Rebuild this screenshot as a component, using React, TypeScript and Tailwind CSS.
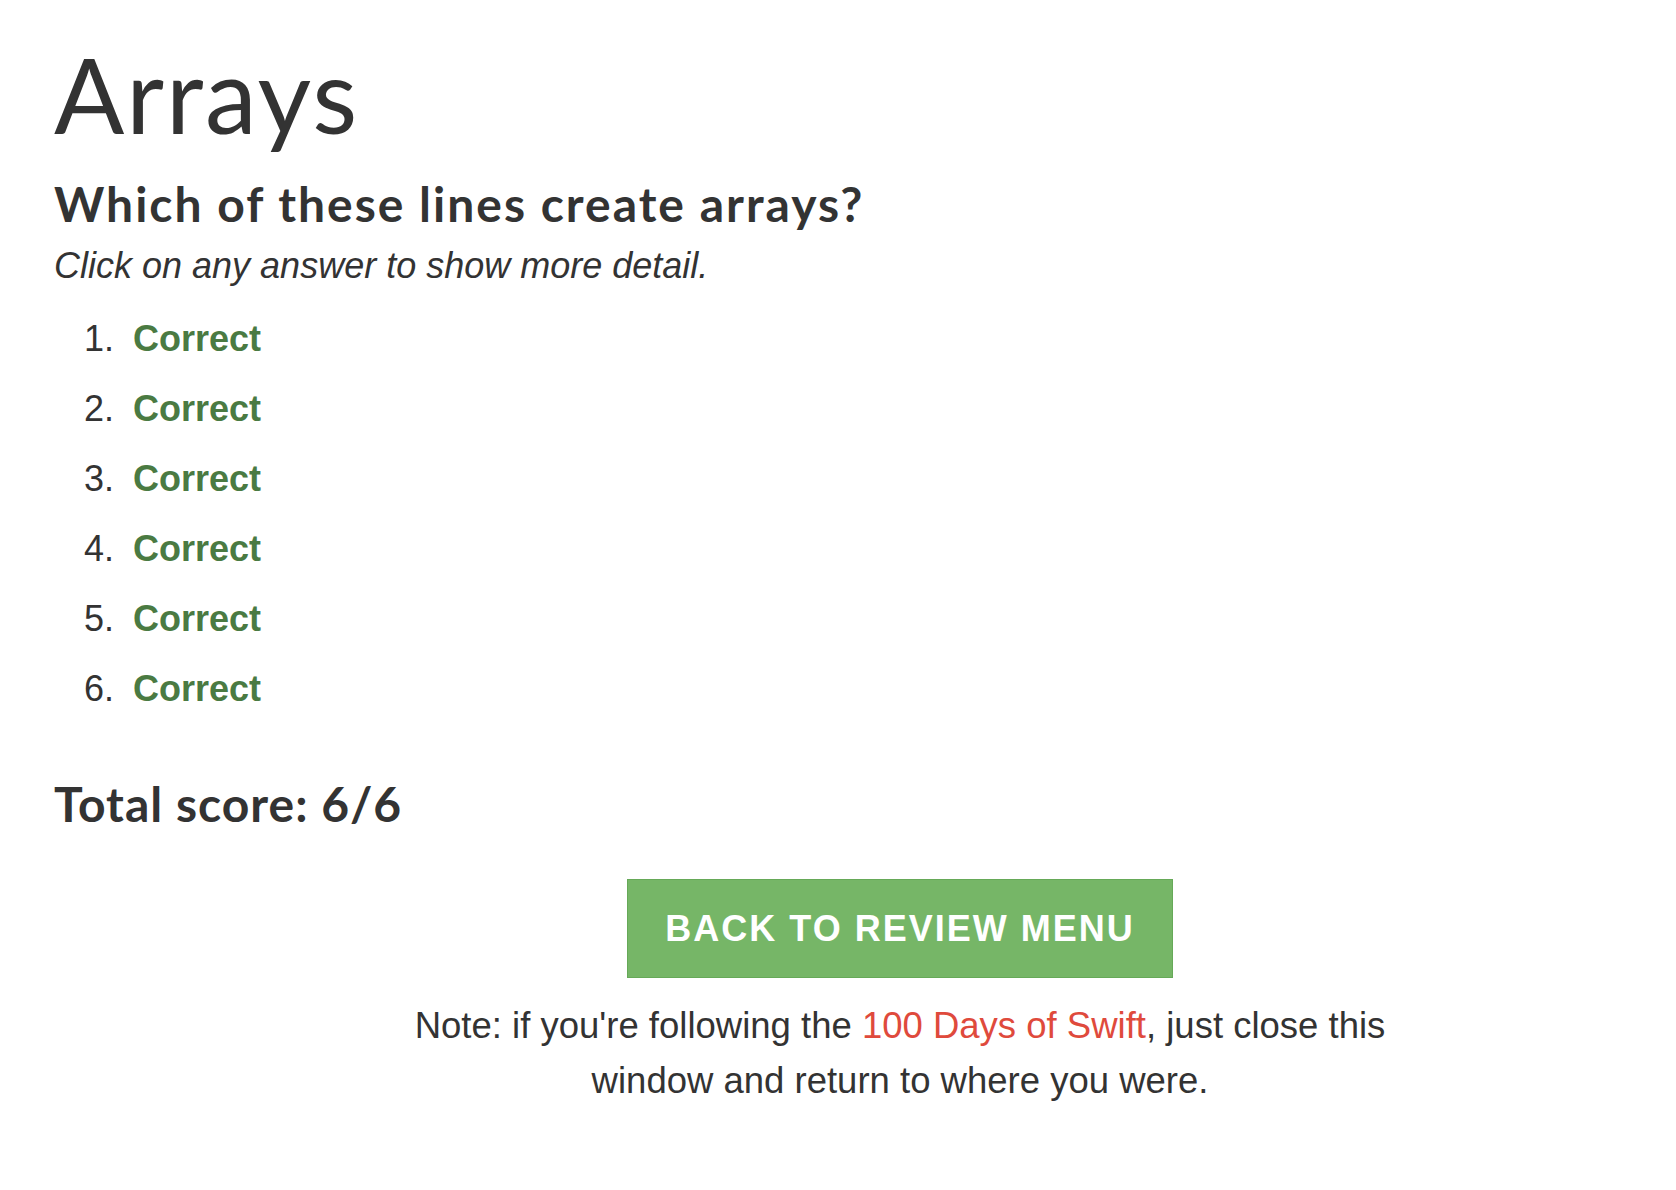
const answers = [1, 2, 3, 4, 5, 6];

export default function App() {
  return (
    <div className="min-h-screen bg-white text-[#333333] font-['Liberation_Sans',Arial,sans-serif]">
      <div className="px-[54px] pt-[42px] pb-16">
        <h1 className="font-['Lato',sans-serif] font-normal text-[104px] leading-[104px] tracking-[2px]">
          Arrays
        </h1>
        <h3 className="mt-[34px] font-['Lato',sans-serif] font-bold text-[48px] leading-[48px] tracking-[2px]">
          Which of these lines create arrays?
        </h3>
        <p className="mt-[20px] italic text-[36px] leading-[36px]">
          Click on any answer to show more detail.
        </p>
        <ol className="mt-[20px] pl-[30px] text-[36px] leading-[70px]">
          {answers.map((n) => (
            <li key={n} className="flex">
              <span className="w-[49px]">{n}.</span>
              <span className="font-bold text-[#4a7a42] cursor-pointer">Correct</span>
            </li>
          ))}
        </ol>
        <h3 className="mt-[56px] font-['Lato',sans-serif] font-bold text-[48px] leading-[48px] tracking-[1px]">
          Total score: 6/6
        </h3>
        <div className="ml-[346px] w-[1000px] flex flex-col items-center">
          <button className="mt-[51px] h-[99px] w-[546px] bg-[#76b667] border border-[#66a958] text-white font-bold text-[36px] uppercase tracking-[2px]">
            Back to review menu
          </button>
          <p className="mt-[20px] text-center text-[36.5px] leading-[55px]">
            Note: if you're following the{" "}
            <a href="#" className="text-[#df4a3c]">
              100 Days of Swift
            </a>
            , just close this window and return to where you were.
          </p>
        </div>
      </div>
    </div>
  );
}
